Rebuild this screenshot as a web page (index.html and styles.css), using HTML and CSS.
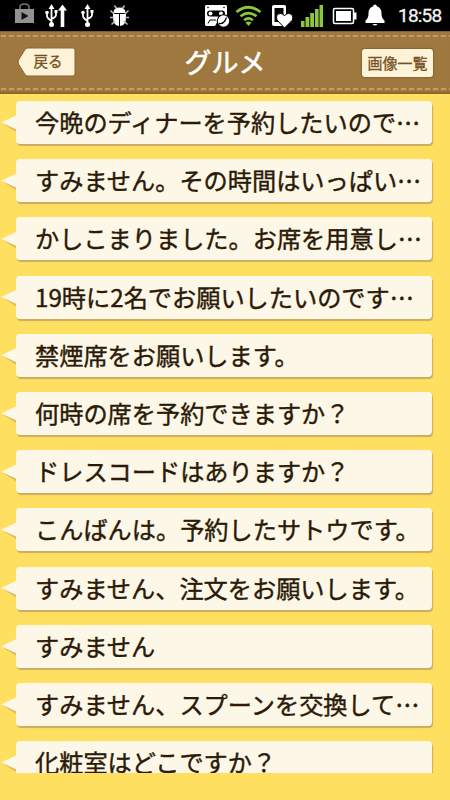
FILE: index.html
```html
<!DOCTYPE html>
<html lang="ja">
<head>
    <meta charset="UTF-8">
    <title>グルメ</title>
    <link rel="stylesheet" href="styles.css">
</head>
<body>
    <div class="status">
        <svg class="status-icons" width="396" height="31" viewBox="0 0 396 31">
            <!-- store bag -->
            <path d="M15 9h19v14H15z" fill="#929292"/>
            <path d="M20 9V7q0-3 4.500-3t4.500 3v2" fill="none" stroke="#777" stroke-width="1.500"/>
            <path d="M21.500 12v8l7-4z" fill="#111"/>
            <!-- usb + arrow -->
            <g fill="none" stroke="#fff" stroke-width="1.800">
                <path d="M51.500 7v17M47 13v3q0 2 4.500 5M56 12v3q0 2-4.500 4"/>
                <path d="M87.500 7v17M83 13v3q0 2 4.500 5M92 12v3q0 2-4.500 4"/>
            </g>
            <g fill="#fff">
                <path d="M51.500 4l3 5h-6zM54.500 10h3v3h-3zM87.500 4l3 5h-6zM90.500 10h3v3h-3z"/>
                <circle cx="47" cy="12.500" r="1.800"/><circle cx="51.500" cy="24.500" r="2.500"/>
                <circle cx="83" cy="12.500" r="1.800"/><circle cx="87.500" cy="24.500" r="2.500"/>
                <path d="M62.500 4.500l4.500 6h-2.700V27h-3.600V10.500H58z"/>
            </g>
            <!-- bug -->
            <g fill="#fff">
                <path d="M113.500 13q0-5.500 6-5.500t6 5.500z"/>
                <path d="M113 14h6v12q-6-1-6-8zM120 14h6v4q0 7-6 8z"/>
            </g>
            <path d="M116.500 8.500l-2-3M122.500 8.500l2-3M114 14l-3.500-3.500M125 14l3.500-3.500M114 17.500h-4M125 17.500h4M115 21l-3.500 3.500M124 21l3.500 3.500" stroke="#bbb" stroke-width="1.500"/>
            <!-- voice recorder -->
            <path d="M206 5h20l1 1v11h-7l-5 9h-9l-1-1V6z" fill="#fff"/>
            <circle cx="208" cy="7.500" r="0.800" fill="#000"/><circle cx="224" cy="7.500" r="0.800" fill="#000"/>
            <path d="M210 10.500h12q3 0 3 3t-3 3h-12q-3 0-3-3t3-3z" fill="#000"/>
            <circle cx="210.500" cy="13.500" r="2" fill="#fff"/><circle cx="221" cy="13.500" r="2" fill="#fff"/>
            <path d="M208 23.500l2-3.500h6" fill="none" stroke="#000" stroke-width="1"/>
            <circle cx="223.500" cy="21" r="6.800" fill="#000"/>
            <circle cx="223.500" cy="21" r="5.700" fill="#fff"/>
            <path d="M219 23.500q5 1 7.500-6" fill="none" stroke="#000" stroke-width="1.300"/>
            <!-- wifi -->
            <g fill="none" stroke="#8dc63f" stroke-width="2.700">
                <path d="M236.500 12q12-9.500 24 0"/>
                <path d="M240.500 16.200q8-6.300 16 0"/>
                <path d="M244.200 20.200q4.300-3.600 8.600 0"/>
            </g>
            <path d="M245.500 22.500q3-2 6 0l-3 3.500z" fill="#8dc63f"/>
            <!-- phone with heart -->
            <path d="M274 5h10.500q1.500 0 1.500 1.500V26h-12q-2 0-2-2V7q0-2 2-2z" fill="#fff"/>
            <path d="M274.500 8h9v14h-9z" fill="#000"/>
            <path d="M284.500 28l-7.500-8q-2-6 3.500-6.500 3 0 4 2.500 1-2.500 4-2.500 5.500.500 4 6.500z" fill="#fff" stroke="#000" stroke-width="1"/>
            <!-- signal -->
            <path d="M301 21h3.500v6H301zM305.500 17h3.800v10h-3.800zM310.200 13h3.800v14h-3.800zM315 9h3.600v18H315zM319.500 5h3.500v22h-3.500z" fill="#8dc63f"/>
            <!-- battery -->
            <rect x="333.500" y="8.500" width="20" height="15" rx="1.500" fill="none" stroke="#fff" stroke-width="1.500"/>
            <path d="M336 11h15v10h-15zM354 12.500h2.500v7H354z" fill="#fff"/>
            <!-- bell -->
            <path d="M375 4.500q1.800 0 1.800 1.800 4.700 1.200 4.700 7.200 0 5 3 7v2.500h-19v-2.500q3-2 3-7 0-6 4.700-7.200 0-1.800 1.800-1.800zM372.500 24h5q-2.500 3-5 0z" fill="#fff"/>
        </svg>
        <span class="clock">18:58</span>
    </div>

    <header class="header">
        <svg class="stitch" width="450" height="2"><path d="M1 1h449" stroke="#d0aa69" stroke-width="1.500" stroke-dasharray="5 3"/></svg>
        <div class="nav">
            <button class="back">
                <svg class="back-shape" width="60" height="31" viewBox="0 0 60 31">
                    <path d="M11 1h45q2 0 2 2v24q0 2-2 2H11q-2 0-3-1.500L1.500 17q-1-2 0-4L8 2.500Q9 1 11 1z" fill="#fdf3d9" stroke="#896531"/>
                </svg>
                <span class="back-text">戻る</span>
            </button>
            <h1>グルメ</h1>
            <button class="gallery">画像一覧</button>
        </div>
        <svg class="stitch" width="450" height="2"><path d="M1 1h449" stroke="#d0aa69" stroke-width="1.500" stroke-dasharray="5 3"/></svg>
    </header>

    <main class="list">
        <div class="phrase">今晩のディナーを予約したいので…</div>
        <div class="phrase">すみません。その時間はいっぱい…</div>
        <div class="phrase">かしこまりました。お席を用意し…</div>
        <div class="phrase">19時に2名でお願いしたいのです…</div>
        <div class="phrase">禁煙席をお願いします。</div>
        <div class="phrase">何時の席を予約できますか？</div>
        <div class="phrase">ドレスコードはありますか？</div>
        <div class="phrase">こんばんは。予約したサトウです。</div>
        <div class="phrase">すみません、注文をお願いします。</div>
        <div class="phrase">すみません</div>
        <div class="phrase">すみません、スプーンを交換して…</div>
        <div class="phrase">化粧室はどこですか？</div>
    </main>
</body>
</html>
```

FILE: styles.css
```css
* { box-sizing: border-box; }
body { margin: 0; width: 450px; height: 800px; overflow: hidden; background: #ffdf60; font-family: "Noto Sans CJK JP", sans-serif; }

.status { display: flex; align-items: center; height: 31px; background: #000; }
.status-icons { flex: none; }
.clock { margin-left: 2px; color: #f4f4f4; font: 400 19px/31px Roboto, sans-serif; letter-spacing: -0.8px; -webkit-text-stroke: 0.3px; }

.header { display: flex; flex-direction: column; justify-content: space-between; height: 63px; padding: 3px 0 4px; background: #9e783f; border-top: 1px solid #7c602f; box-shadow: inset 0 -2px 1px #8c6632; }
.stitch { display: block; }
.nav { display: grid; grid-template-columns: 60px 1fr 73px; align-items: center; height: 50px; padding: 0 16px 0 17px; }
.nav h1 { margin: -2px 0 0 12px; color: #fff; font-size: 27px; font-weight: 400; line-height: 40px; text-align: center; -webkit-text-stroke: 0.6px; }
button { padding: 0; border: 0; background: none; font-family: inherit; color: #76501f; -webkit-text-stroke: 0.3px; }
.back { display: grid; height: 31px; font-size: 14.5px; line-height: 28px; }
.back-shape, .back-text { grid-area: 1 / 1; }
.back-text { padding-left: 2px; }
.gallery { height: 28px; margin: 0 1px; border-radius: 3px; background: #fdf3d9; box-shadow: 0 0 1px 1px #896531; font-size: 15px; line-height: 26px; white-space: nowrap; }

.list { height: 679px; padding: 7px 18px 0 16px; overflow: hidden; }
.phrase { position: relative; height: 43px; margin-bottom: 15.2px; padding-left: 19px; background: #fcf7e7; border-radius: 4px; box-shadow: 1px 2px 1px #c9ad63; color: #2b1a08; font-size: 24.2px; line-height: 41px; white-space: nowrap; -webkit-text-stroke: 0.4px; }
.phrase::before { content: ""; position: absolute; left: -15px; top: 14px; width: 16px; height: 15px; background: #fcf7e7; clip-path: polygon(0 50%, 100% 0, 100% 100%); }
.phrase::after { content: ""; position: absolute; left: -14px; top: 22px; width: 14px; height: 9px; background: #d9bd6d; clip-path: polygon(0 0, 100% 70%, 100% 100%); }
```
